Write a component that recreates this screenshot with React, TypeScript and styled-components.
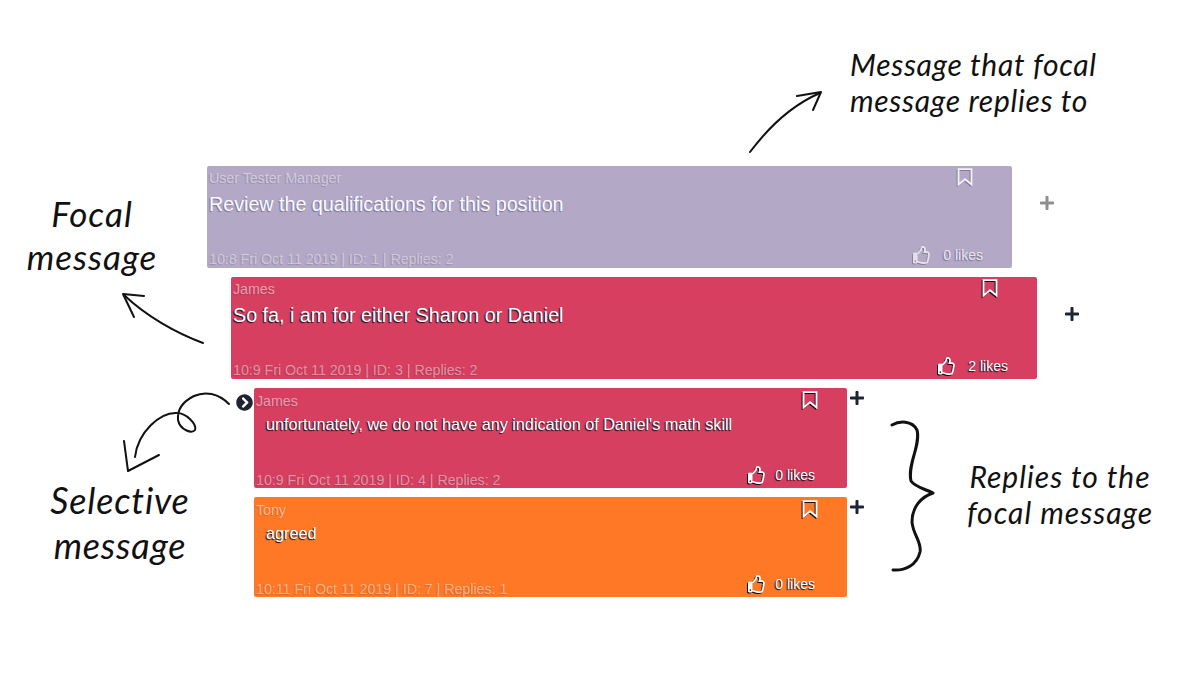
import styled, { createGlobalStyle } from "styled-components";
import { FaChevronCircleRight, FaPlus, FaRegThumbsUp } from "react-icons/fa";

type Tone = "muted" | "rose" | "orange";

const tones = {
  muted: { bg: "#b3a9c7", shadow: "rgba(90,80,110,.6)", plus: "#8f8f8f", text: "#fbfaff" },
  rose: { bg: "#d63f60", shadow: "#10101c", plus: "#1f2430", text: "#ffffff" },
  orange: { bg: "#ff7826", shadow: "#10101c", plus: "#1f2430", text: "#ffffff" },
};

const messages = [
  {
    id: 1,
    tone: "muted" as Tone,
    indent: 207,
    width: 805,
    focal: false,
    author: "User Tester Manager",
    text: "Review the qualifications for this position",
    meta: "10:8 Fri Oct 11 2019 | ID: 1 | Replies: 2",
    likes: 0,
  },
  {
    id: 3,
    tone: "rose" as Tone,
    indent: 231,
    width: 806,
    focal: false,
    author: "James",
    text: "So fa, i am for either Sharon or Daniel",
    meta: "10:9 Fri Oct 11 2019 | ID: 3 | Replies: 2",
    likes: 2,
  },
  {
    id: 4,
    tone: "rose" as Tone,
    indent: 254,
    width: 593,
    focal: true,
    author: "James",
    text: "unfortunately, we do not have any indication of Daniel's math skill",
    meta: "10:9 Fri Oct 11 2019 | ID: 4 | Replies: 2",
    likes: 0,
  },
  {
    id: 7,
    tone: "orange" as Tone,
    indent: 254,
    width: 593,
    focal: false,
    author: "Tony",
    text: "agreed",
    meta: "10:11 Fri Oct 11 2019 | ID: 7 | Replies: 1",
    likes: 0,
  },
];

const App = () => {
  return (
    <Page>
      <GlobalStyle />
      <Thread>
        {messages.map((m) => {
          const reply = m.width < 700;
          return (
            <Row key={m.id} $indent={m.indent} $reply={reply}>
              <Card $tone={m.tone} $width={m.width} $reply={reply}>
                {m.focal && (
                  <Selector>
                    <FaChevronCircleRight />
                  </Selector>
                )}
                <CardTop>
                  <Author $tone={m.tone}>{m.author}</Author>
                  <Mark $tone={m.tone} $reply={reply} viewBox="0 0 16 18">
                    <path d="M1.5 1.2H14.5V16.5L8 11.2L1.5 16.5Z" />
                  </Mark>
                </CardTop>
                <Body $tone={m.tone} $reply={reply}>
                  {m.text}
                </Body>
                <CardBottom>
                  <Meta $tone={m.tone}>{m.meta}</Meta>
                  <Likes $tone={m.tone} $reply={reply}>
                    <FaRegThumbsUp />
                    <span>{m.likes} likes</span>
                  </Likes>
                </CardBottom>
              </Card>
              <PlusButton $tone={m.tone} $reply={reply}>
                <FaPlus />
              </PlusButton>
            </Row>
          );
        })}
      </Thread>

      <Note $left={850} $top={46} $width={260} $size={30} $leading={36} $track={0.7}>
        Message that focal
        <br />
        message replies to
      </Note>
      <Note $left={12} $top={192} $width={160} $size={35} $leading={43} $track={1} $center>
        Focal
        <br />
        message
      </Note>
      <Note $left={30} $top={478} $width={180} $size={36} $leading={45} $track={0.8} $center>
        Selective
        <br />
        message
      </Note>
      <Note $left={950} $top={458} $width={220} $size={30} $leading={36} $track={1} $center>
        Replies to the
        <br />
        focal message
      </Note>

      <Scribble viewBox="0 0 1200 700">
        <path d="M750 152C768 128 790 106 820 93" />
        <path d="M797 96L821 92L813 110" />
        <path d="M203 343C176 333 146 316 124 295" />
        <path d="M144 296L123 294L134 317" />
        <path d="M229 404C218 393 205 391 194 396C184 401 177 409 178 420C180 430 192 434 195 430C197 424 186 413 177 413C160 412 138 432 135 457" />
        <path d="M124 441L128 471L159 455" />
        <path
          className="heavy"
          d="M892 425C899 421 912 420 917 430C921 445 907 465 911 481C915 487 925 489 933 493C921 497 912 507 912 522C913 535 922 542 920 552C917 565 905 571 893 570"
        />
      </Scribble>
    </Page>
  );
};

const GlobalStyle = createGlobalStyle`
  html, body {
    margin: 0;
    background: #fff;
  }
`;

const Page = styled.div`
  position: relative;
  width: 1200px;
  height: 700px;
  overflow: hidden;
  background: #fff;
  font-family: "Liberation Sans", Arial, sans-serif;
`;

const Thread = styled.main`
  display: flex;
  flex-direction: column;
  gap: 9px;
  padding-top: 166px;
`;

const Row = styled.div<{ $indent: number; $reply: boolean }>`
  display: flex;
  align-items: flex-start;
  margin-left: ${(p) => p.$indent}px;
  gap: ${(p) => (p.$reply ? "2px" : "27px")};
`;

const Card = styled.article<{ $tone: Tone; $width: number; $reply: boolean }>`
  position: relative;
  display: flex;
  flex-direction: column;
  box-sizing: border-box;
  width: ${(p) => p.$width}px;
  height: ${(p) => (p.$reply ? 100 : 102)}px;
  padding: ${(p) => (p.$reply ? "3px 2px 0" : "2px 2px 1px")};
  border-radius: 2px;
  background: ${(p) => tones[p.$tone].bg};
`;

const Selector = styled.span`
  position: absolute;
  left: -18px;
  top: 6px;
  display: flex;
  font-size: 17px;
  color: #1f2430;
`;

const CardTop = styled.header`
  display: flex;
  justify-content: space-between;
  align-items: flex-start;
  height: 21px;
`;

const Author = styled.span<{ $tone: Tone }>`
  font-size: 14.2px;
  line-height: 20px;
  color: rgba(255, 255, 255, ${(p) => (p.$tone === "muted" ? 0.45 : 0.5)});
  text-shadow: -1px 1px 1px rgba(40, 30, 50, 0.18);
`;

const Mark = styled.svg<{ $tone: Tone; $reply: boolean }>`
  flex: none;
  width: 16px;
  height: 18px;
  margin-right: ${(p) => (p.$reply ? "27px" : "37px")};
  filter: drop-shadow(-1px 1px 0 ${(p) => tones[p.$tone].shadow});
  opacity: ${(p) => (p.$tone === "muted" ? 0.85 : 1)};

  path {
    fill: none;
    stroke: #fff;
    stroke-width: 1.8;
    stroke-linejoin: miter;
  }
`;

const Body = styled.p<{ $tone: Tone; $reply: boolean }>`
  margin: ${(p) => (p.$reply ? "2px 0 0 10px" : "3px 0 0")};
  font-size: ${(p) => (p.$reply ? "16.2px" : "19.7px")};
  line-height: ${(p) => (p.$reply ? "20px" : "24px")};
  white-space: nowrap;
  color: ${(p) => tones[p.$tone].text};
  text-shadow: -1px 1px 1px ${(p) => tones[p.$tone].shadow};
`;

const CardBottom = styled.footer`
  display: flex;
  justify-content: space-between;
  align-items: flex-end;
  margin-top: auto;
`;

const Meta = styled.span<{ $tone: Tone }>`
  font-size: 14.2px;
  line-height: 15px;
  color: rgba(255, 255, 255, ${(p) => (p.$tone === "muted" ? 0.42 : 0.45)});
  text-shadow: -1px 1px 1px rgba(40, 30, 50, 0.18);
`;

const Likes = styled.span<{ $tone: Tone; $reply: boolean }>`
  display: flex;
  align-items: center;
  gap: ${(p) => (p.$reply ? "9px" : "12px")};
  margin: 0 ${(p) => (p.$reply ? "30px" : "27px")} ${(p) => (p.$reply ? "4px" : "3px")} 0;
  font-size: 14px;
  color: ${(p) => (p.$tone === "muted" ? "rgba(255,255,255,.75)" : "#fff")};
  text-shadow: -1px 1px 1px ${(p) => tones[p.$tone].shadow};

  svg {
    width: 18px;
    height: 18px;
    filter: drop-shadow(-1px 1px 0 ${(p) => tones[p.$tone].shadow});
  }
`;

const PlusButton = styled.span<{ $tone: Tone; $reply: boolean }>`
  display: flex;
  margin-top: ${(p) => (p.$reply ? "2px" : "29px")};
  font-size: 16px;
  color: ${(p) => tones[p.$tone].plus};
`;

const Note = styled.div<{
  $left: number;
  $top: number;
  $width: number;
  $size: number;
  $leading: number;
  $track: number;
  $center?: boolean;
}>`
  position: absolute;
  left: ${(p) => p.$left}px;
  top: ${(p) => p.$top}px;
  width: ${(p) => p.$width}px;
  font-family: Lato, sans-serif;
  font-style: italic;
  font-weight: 400;
  font-size: ${(p) => p.$size}px;
  line-height: ${(p) => p.$leading}px;
  letter-spacing: ${(p) => p.$track}px;
  white-space: nowrap;
  color: #111;
  text-align: ${(p) => (p.$center ? "center" : "left")};
`;

const Scribble = styled.svg`
  position: absolute;
  inset: 0;
  width: 1200px;
  height: 700px;
  pointer-events: none;

  path {
    fill: none;
    stroke: #111;
    stroke-width: 2;
    stroke-linecap: round;
    stroke-linejoin: round;
  }

  path.heavy {
    stroke-width: 3;
  }
`;

export default App;
